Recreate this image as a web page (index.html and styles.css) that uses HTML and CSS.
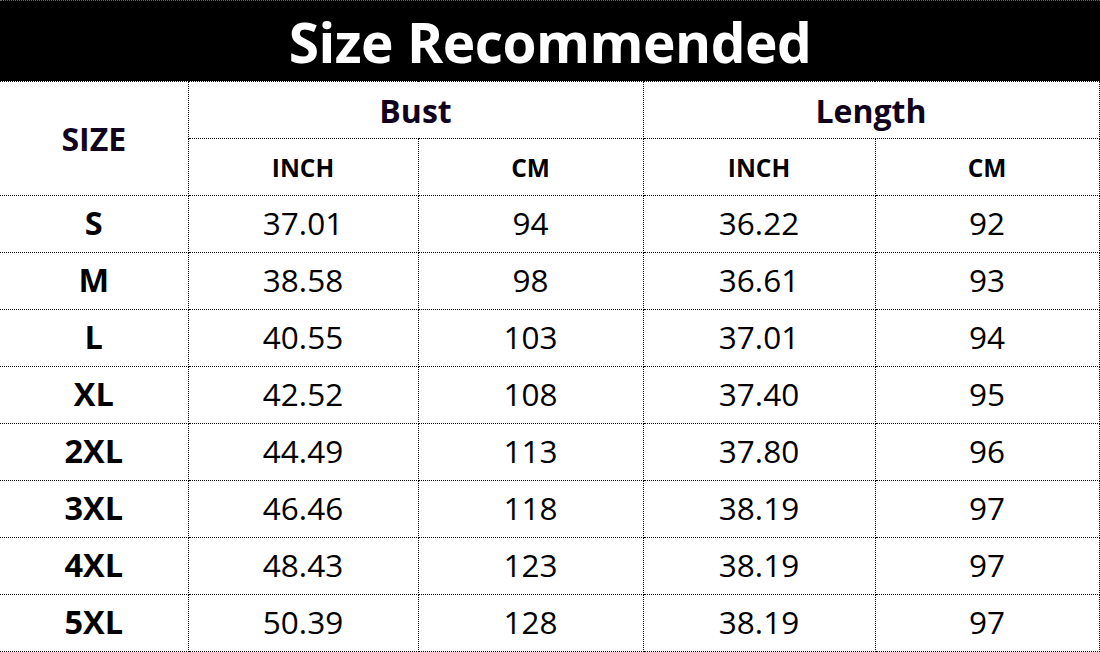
FILE: index.html
```html
<!DOCTYPE html>
<html>
<head>
<meta charset="utf-8">
<link rel="stylesheet" href="styles.css">
</head>
<body>
<div class="chart">
  <div class="title">Size Recommended</div>
  <table class="sizes">
    <colgroup>
      <col class="c-size"><col class="c-bi"><col class="c-bc"><col class="c-li"><col class="c-lc">
    </colgroup>
    <thead>
      <tr>
        <th rowspan="2" class="h-size">SIZE</th>
        <th colspan="2" class="h-group">Bust</th>
        <th colspan="2" class="h-group">Length</th>
      </tr>
      <tr>
        <th class="h-unit">INCH</th><th class="h-unit">CM</th>
        <th class="h-unit">INCH</th><th class="h-unit">CM</th>
      </tr>
    </thead>
    <tbody>
      <tr><th>S</th><td>37.01</td><td>94</td><td>36.22</td><td>92</td></tr>
      <tr><th>M</th><td>38.58</td><td>98</td><td>36.61</td><td>93</td></tr>
      <tr><th>L</th><td>40.55</td><td>103</td><td>37.01</td><td>94</td></tr>
      <tr><th>XL</th><td>42.52</td><td>108</td><td>37.40</td><td>95</td></tr>
      <tr><th>2XL</th><td>44.49</td><td>113</td><td>37.80</td><td>96</td></tr>
      <tr><th>3XL</th><td>46.46</td><td>118</td><td>38.19</td><td>97</td></tr>
      <tr><th>4XL</th><td>48.43</td><td>123</td><td>38.19</td><td>97</td></tr>
      <tr><th>5XL</th><td>50.39</td><td>128</td><td>38.19</td><td>97</td></tr>
    </tbody>
  </table>
</div>
</body>
</html>
```
FILE: styles.css
```css
html, body {
  margin: 0;
  padding: 0;
  background: #fff;
}
body {
  font-family: "Open Sans", "Noto Sans", sans-serif;
  color: #000;
}
.chart {
  width: 1100px;
}
.title {
  height: 81px;
  background: #000;
  color: #fff;
  font-weight: 700;
  font-size: 55px;
  line-height: 81px;
  text-align: center;
  letter-spacing: -0.5px;
  border-top: 1px dotted #666;
  box-sizing: border-box;
}
.sizes {
  border-collapse: collapse;
  table-layout: fixed;
  width: 1099px;
}
.c-size { width: 188px; }
.c-bi { width: 230px; }
.c-bc { width: 225px; }
.c-li { width: 232px; }
.c-lc { width: 224px; }
.sizes th, .sizes td {
  border: 1px dotted #000;
  height: 57px;
  padding: 0;
  text-align: center;
  vertical-align: middle;
  box-sizing: border-box;
}
.sizes tr > :first-child {
  border-left: none;
}
.sizes tbody td, .sizes tbody th {
  padding-bottom: 3px;
}
.sizes td {
  font-size: 31.5px;
  font-weight: 400;
  letter-spacing: 0;
}
.sizes tbody th {
  font-size: 32.5px;
  font-weight: 700;
}
.h-size, .h-group {
  font-size: 32px;
  font-weight: 700;
  color: #10021f;
}
.h-group {
  padding-bottom: 4px;
}
.h-size {
  padding-bottom: 2px;
}
.h-unit {
  font-size: 24.5px;
  font-weight: 700;
  padding-bottom: 2px;
}
```
